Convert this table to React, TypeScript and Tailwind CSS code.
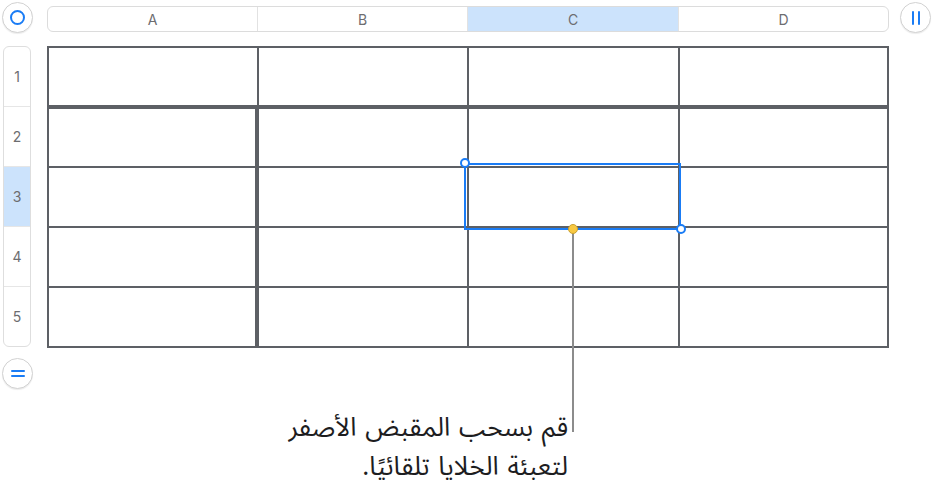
import React from "react";

function CircleBtn({ children, className = "" }: { children: React.ReactNode; className?: string }) {
  return (
    <div
      className={`flex items-center justify-center rounded-full bg-white border border-[#d2d2d2] shadow-[0_1px_1px_rgba(0,0,0,0.08)] ${className}`}
    >
      {children}
    </div>
  );
}

export default function App() {
  const cols = ["A", "B", "C", "D"];
  const rows = [1, 2, 3, 4, 5];
  return (
    <div className="relative w-[935px] h-[502px] bg-white overflow-hidden" style={{ fontFamily: "Inter, 'Liberation Sans', sans-serif" }}>
      {/* top bar */}
      <div className="flex items-start h-[46px]">
        <CircleBtn className="w-[31px] h-[31px] ml-[2px] mt-[2px]">
          <div className="w-[15px] h-[15px] rounded-full border-2 border-[#1a7cf5]" />
        </CircleBtn>
        <div className="ml-[14px] mt-[6px] w-[842px] h-[26px] flex rounded-[6px] border border-[#dcdcdc] bg-white overflow-hidden">
          {cols.map((c, i) => (
            <div
              key={c}
              className={`flex items-center justify-center text-[14px] text-[#6d6d70] ${i < 3 ? "border-r border-[#e2e2e2]" : ""} ${c === "C" ? "bg-[#cce3fc]" : ""} ${i === 3 ? "flex-1" : i === 2 ? "w-[211px]" : "w-[210px]"}`}
            >
              {c}
            </div>
          ))}
        </div>
        <CircleBtn className="w-[31px] h-[31px] ml-[11px] mt-[2px]">
          <div className="flex gap-[4px]">
            <div className="w-[2px] h-[14px] bg-[#1a7cf5] rounded-full" />
            <div className="w-[2px] h-[14px] bg-[#1a7cf5] rounded-full" />
          </div>
        </CircleBtn>
      </div>

      {/* main */}
      <div className="flex items-start">
        <div className="ml-[3px] w-[28px] h-[301px] rounded-[6px] border border-[#dedede] overflow-hidden flex flex-col">
          {rows.map((r, i) => (
            <div
              key={r}
              className={`h-[60px] flex items-center justify-center text-[14px] text-[#6d6d70] ${i < 4 ? "border-b border-[#e6e6e6]" : "flex-1"} ${r === 3 ? "bg-[#cce3fc]" : ""}`}
            >
              {r}
            </div>
          ))}
        </div>
        <div className="relative ml-[16px]">
          <div className="w-[842px] h-[302px] bg-[#5d6065] p-[2px] grid gap-[2px] grid-cols-[208px_208px_209px_207px] grid-rows-[59px_57px_58px_58px_58px]">
            {rows.map((r) =>
              cols.map((c, ci) => (
                <div
                  key={`${r}${c}`}
                  className={`bg-white ${r === 1 ? "border-b-2 border-[#5d6065]" : ""} ${r > 1 && ci === 0 ? "border-r-2 border-[#5d6065]" : ""}`}
                />
              ))
            )}
          </div>
          {/* selection overlay */}
          <div className="absolute left-[417px] top-[117px] w-[217px] h-[67px] border-2 border-[#1a7cf5]" />
          <div className="absolute left-[413px] top-[112px] w-[10px] h-[10px] rounded-full bg-white border-2 border-[#1a7cf5]" />
          <div className="absolute left-[629px] top-[178px] w-[10px] h-[10px] rounded-full bg-white border-2 border-[#1a7cf5]" />
          <div className="absolute left-[525px] top-[187px] w-[2px] h-[199px] bg-[#8c8c8c]" />
          <div className="absolute left-[521px] top-[178px] w-[10px] h-[10px] rounded-full bg-[#f7c842] border border-[#c9a030]" />
        </div>
      </div>

      <CircleBtn className="w-[31px] h-[31px] ml-[2px] mt-[10px]">
        <div className="flex flex-col gap-[3px]">
          <div className="w-[14px] h-[2px] bg-[#1a7cf5] rounded-full" />
          <div className="w-[14px] h-[2px] bg-[#1a7cf5] rounded-full" />
        </div>
      </CircleBtn>

      <div
        dir="rtl"
        className="w-[568px] mt-[19px] text-right text-[26px] leading-[39px] text-[#1d1d1f] [word-spacing:2px]"
        style={{ fontFamily: "'Noto Sans Arabic', 'DejaVu Sans', 'Noto Sans', sans-serif" }}
      >
        <div>قم بسحب المقبض الأصفر</div>
        <div>لتعبئة الخلايا تلقائيًا.</div>
      </div>
    </div>
  );
}
